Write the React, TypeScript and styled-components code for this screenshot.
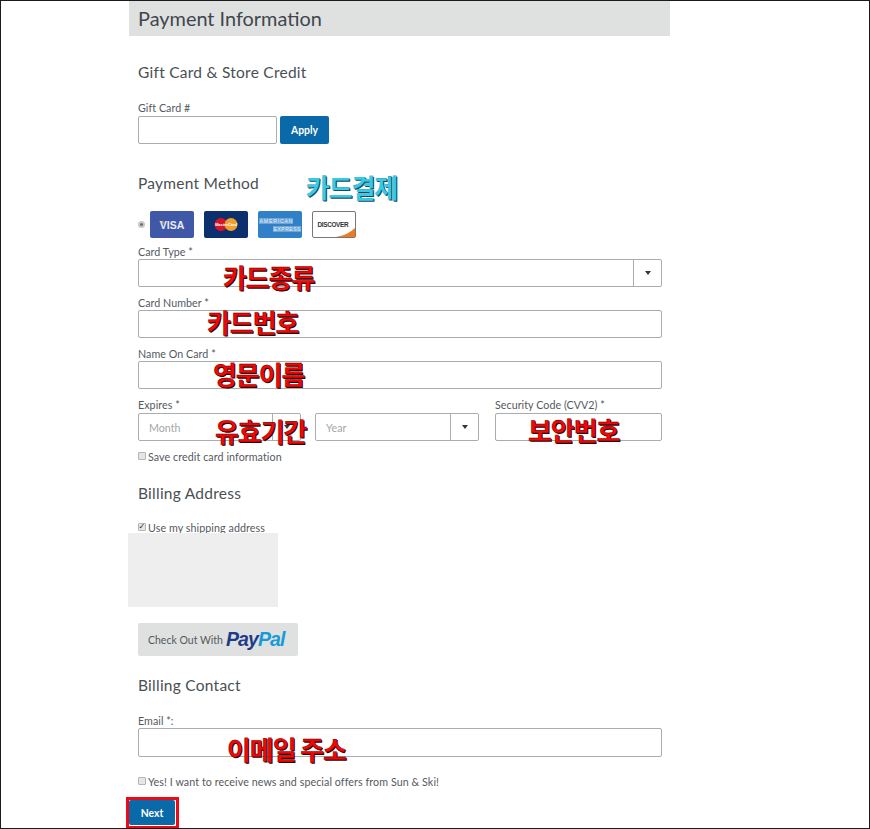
import React from 'react';
import styled, { createGlobalStyle } from 'styled-components';

const GlobalStyle = createGlobalStyle`
  html, body {
    margin: 0;
    padding: 0;
    background: #fff;
  }
  * {
    box-sizing: border-box;
  }
`;

const Frame = styled.div`
  position: relative;
  width: 870px;
  height: 829px;
  overflow: hidden;
  border: 1px solid #1b1b1b;
  padding-left: 128px;
  background: #fff;
  color: #4a4f54;
  font-family: Lato, 'Liberation Sans', sans-serif;
`;

const Column = styled.div`
  width: 541px;
`;

const PageTitle = styled.h1`
  margin: 0;
  height: 35px;
  padding-left: 9px;
  background: #dfe1e1;
  color: #40464c;
  font-size: 19.9px;
  font-weight: 400;
  line-height: 35px;
`;

const Body = styled.div`
  padding: 0 8px 0 9px;
`;

const SectionTitle = styled.h2<{ $top: number }>`
  margin: ${(p) => p.$top}px 0 0;
  height: 20px;
  color: #4a4f54;
  font-size: 15.5px;
  font-weight: 400;
  line-height: 20px;
  letter-spacing: 0.25px;
`;

const Label = styled.label<{ $top?: number }>`
  display: block;
  margin-top: ${(p) => p.$top ?? 0}px;
  height: 15px;
  font-size: 10.7px;
  line-height: 15px;
  color: #55595e;
  letter-spacing: 0.05px;
`;

const Row = styled.div`
  display: flex;
  gap: 3px;
  margin-top: 1px;
`;

const Input = styled.div<{ $width?: number; $height?: number }>`
  width: ${(p) => (p.$width ? `${p.$width}px` : '100%')};
  height: ${(p) => p.$height ?? 28}px;
  border: 1px solid #a9adad;
  border-radius: 2px;
  background: #fff;
`;

const Select = styled.div`
  display: flex;
  align-items: center;
  justify-content: space-between;
  height: 28px;
  border: 1px solid #a9adad;
  border-radius: 2px;
  background: #fff;
  padding-left: 10px;
  font-size: 10.7px;
  color: #a3a6a8;
`;

const Caret = styled.span`
  display: flex;
  align-items: center;
  justify-content: center;
  width: 28px;
  height: 100%;
  border-left: 1px solid #a9adad;

  &::after {
    content: '';
    border-left: 3.5px solid transparent;
    border-right: 3.5px solid transparent;
    border-top: 4px solid #33373a;
  }
`;

const Button = styled.button<{ $width: number; $height: number }>`
  display: block;
  width: ${(p) => p.$width}px;
  height: ${(p) => p.$height}px;
  padding: 0;
  border: 0;
  border-radius: 2px;
  background: #0a69a8;
  color: #fff;
  font-family: inherit;
  font-size: 10.4px;
  font-weight: 700;
`;

const CardRow = styled.div`
  display: flex;
  align-items: center;
  margin-top: 18px;
  height: 27px;
`;

const Radio = styled.span`
  display: block;
  width: 7px;
  height: 7px;
  margin-right: 5px;
  border: 2px solid #c9c9c9;
  border-radius: 50%;
  background: #6e6e6e;
`;

const Cards = styled.div`
  display: flex;
  gap: 10px;
`;

const CardLogo = styled.svg`
  display: block;
  width: 44px;
  height: 27px;
`;

const ExpiryRow = styled.div`
  display: grid;
  grid-template-columns: 163px 164px 167px;
  column-gap: 14px;
  margin-top: 9px;

  & label {
    line-height: 14px;
  }

  & > :last-child {
    margin-left: 2px;
    width: 167px;
  }
`;

const CheckRow = styled.div<{ $top: number }>`
  display: flex;
  align-items: center;
  gap: 2px;
  height: 14px;
  margin-top: ${(p) => p.$top}px;
  font-size: 10.7px;
  letter-spacing: 0.08px;
  color: #55595e;
`;

const Check = styled.span`
  display: flex;
  align-items: center;
  justify-content: center;
  width: 8px;
  height: 8px;
  border: 1px solid #b5b5b5;
  border-radius: 1px;
  background: #e6e6e6;
  color: #222;
  font-size: 8px;
  font-weight: 700;
  line-height: 8px;
  font-family: 'DejaVu Sans', sans-serif;
`;

const Redacted = styled.div`
  position: relative;
  width: 150px;
  height: 74px;
  margin: -1px 0 0 -10px;
  background: #eeeeee;
`;

const PayPalButton = styled.button`
  display: flex;
  align-items: center;
  width: 160px;
  height: 33px;
  margin-top: 16px;
  padding: 0 0 0 10px;
  border: 0;
  border-radius: 2px;
  background: #dfe1e1;
  color: #54585c;
  font-family: inherit;
  font-size: 10.5px;
`;

const PayPalMark = styled.span`
  margin-left: 3px;
  font-family: 'Liberation Sans', sans-serif;
  font-size: 19.5px;
  font-style: italic;
  font-weight: 700;
  letter-spacing: -0.9px;
  color: #1f3a87;

  & > b {
    color: #179bd7;
  }
`;

const NextHighlight = styled.div`
  width: 53px;
  height: 32px;
  margin: 9px 0 0 -12px;
  border: 3px solid #ee0a12;
  background: #fff;
`;

const Annotation = styled.span<{ $x: number; $y: number; $sky?: boolean }>`
  position: absolute;
  left: ${(p) => p.$x}px;
  top: ${(p) => p.$y}px;
  font-family: 'Noto Sans CJK KR', sans-serif;
  font-size: 26px;
  font-weight: 700;
  line-height: 26px;
  white-space: nowrap;
  letter-spacing: -1.1px;
  color: ${(p) => (p.$sky ? '#35cbe6' : '#f00808')};
  -webkit-text-stroke: ${(p) => (p.$sky ? '0.2px #16506a' : '0.3px #3a0000')};
  text-shadow: 1px 1px 0 ${(p) => (p.$sky ? '#1c4a60' : '#2a0000')};
`;

const notes = [
  { text: '카드결제', x: 305, y: 173, sky: true },
  { text: '카드종류', x: 222, y: 263 },
  { text: '카드번호', x: 206, y: 308 },
  { text: '영문이름', x: 212, y: 360 },
  { text: '유효기간', x: 214, y: 417 },
  { text: '보안번호', x: 527, y: 416 },
  { text: '이메일 주소', x: 226, y: 735 },
];

function VisaLogo() {
  return (
    <CardLogo viewBox="0 0 44 27">
      <rect width="44" height="27" rx="2" fill="#3f58a8" />
      <path d="M9 10 L13 10 L14 13 Z" fill="#e0a53c" />
      <text x="22" y="18" textAnchor="middle" fill="#e9ecf5" fontFamily="Liberation Sans" fontSize="10.5" fontWeight="700">
        VISA
      </text>
    </CardLogo>
  );
}

function MasterLogo() {
  return (
    <CardLogo viewBox="0 0 44 27">
      <rect width="44" height="27" rx="2" fill="#0c2f6d" />
      <circle cx="17" cy="13.5" r="6.5" fill="#d9132a" />
      <circle cx="27" cy="13.5" r="6.5" fill="#f0a02c" />
      <text x="22" y="15" textAnchor="middle" fill="#fff" fontFamily="Liberation Sans" fontSize="4" fontStyle="italic" fontWeight="700">
        MasterCard
      </text>
    </CardLogo>
  );
}

function AmexLogo() {
  return (
    <CardLogo viewBox="0 0 44 27">
      <rect width="44" height="27" rx="2" fill="#2f80c6" />
      <rect x="1" y="7" width="34" height="6" fill="#6ea6d8" />
      <rect x="15" y="15" width="28" height="6" fill="#6ea6d8" />
      <text x="18" y="12" textAnchor="middle" fill="#e8f1f9" fontFamily="Liberation Sans" fontSize="5.2" textLength="33">
        AMERICAN
      </text>
      <text x="29" y="20" textAnchor="middle" fill="#e8f1f9" fontFamily="Liberation Sans" fontSize="5.2" textLength="27">
        EXPRESS
      </text>
    </CardLogo>
  );
}

function DiscoverLogo() {
  return (
    <CardLogo viewBox="0 0 44 27">
      <rect x="0.5" y="0.5" width="43" height="26" rx="1.5" fill="#fff" stroke="#777" />
      <path d="M43 17 V26 H24 Q36 24 43 17 Z" fill="#ee7a22" />
      <text x="21" y="16" textAnchor="middle" fill="#333" fontFamily="Liberation Sans" fontSize="6.4" fontWeight="700" textLength="31">
        DISCOVER
      </text>
    </CardLogo>
  );
}

export default function App() {
  return (
    <>
      <GlobalStyle />
      <Frame>
        <Column>
          <PageTitle>Payment Information</PageTitle>
          <Body>
            <SectionTitle $top={26}>Gift Card &amp; Store Credit</SectionTitle>
            <Label $top={18}>Gift Card #</Label>
            <Row>
              <Input $width={139} />
              <Button $width={49} $height={28}>Apply</Button>
            </Row>

            <SectionTitle $top={29}>Payment Method</SectionTitle>
            <CardRow>
              <Radio />
              <Cards>
                <VisaLogo />
                <MasterLogo />
                <AmexLogo />
                <DiscoverLogo />
              </Cards>
            </CardRow>

            <Label $top={6}>Card Type *</Label>
            <Select>
              <span />
              <Caret />
            </Select>
            <Label $top={8}>Card Number *</Label>
            <Input />
            <Label $top={8}>Name On Card *</Label>
            <Input />

            <ExpiryRow>
              <div>
                <Label>Expires *</Label>
                <Select>
                  Month
                  <Caret />
                </Select>
              </div>
              <div>
                <Label>&nbsp;</Label>
                <Select>
                  Year
                  <Caret />
                </Select>
              </div>
              <div>
                <Label>Security Code (CVV2) *</Label>
                <Input />
              </div>
            </ExpiryRow>

            <CheckRow $top={8}>
              <Check />
              Save credit card information
            </CheckRow>

            <SectionTitle $top={20}>Billing Address</SectionTitle>
            <CheckRow $top={17}>
              <Check>✓</Check>
              Use my shipping address
            </CheckRow>
            <Redacted />
            <PayPalButton>
              Check Out With
              <PayPalMark>
                Pay<b>Pal</b>
              </PayPalMark>
            </PayPalButton>

            <SectionTitle $top={19}>Billing Contact</SectionTitle>
            <Label $top={18}>Email *:</Label>
            <Input $height={29} />
            <CheckRow $top={17}>
              <Check />
              Yes! I want to receive news and special offers from Sun &amp; Ski!
            </CheckRow>
            <NextHighlight>
              <Button $width={46} $height={25}>Next</Button>
            </NextHighlight>
          </Body>
        </Column>
        {notes.map((n) => (
          <Annotation key={n.text} $x={n.x} $y={n.y} $sky={n.sky}>
            {n.text}
          </Annotation>
        ))}
      </Frame>
    </>
  );
}
